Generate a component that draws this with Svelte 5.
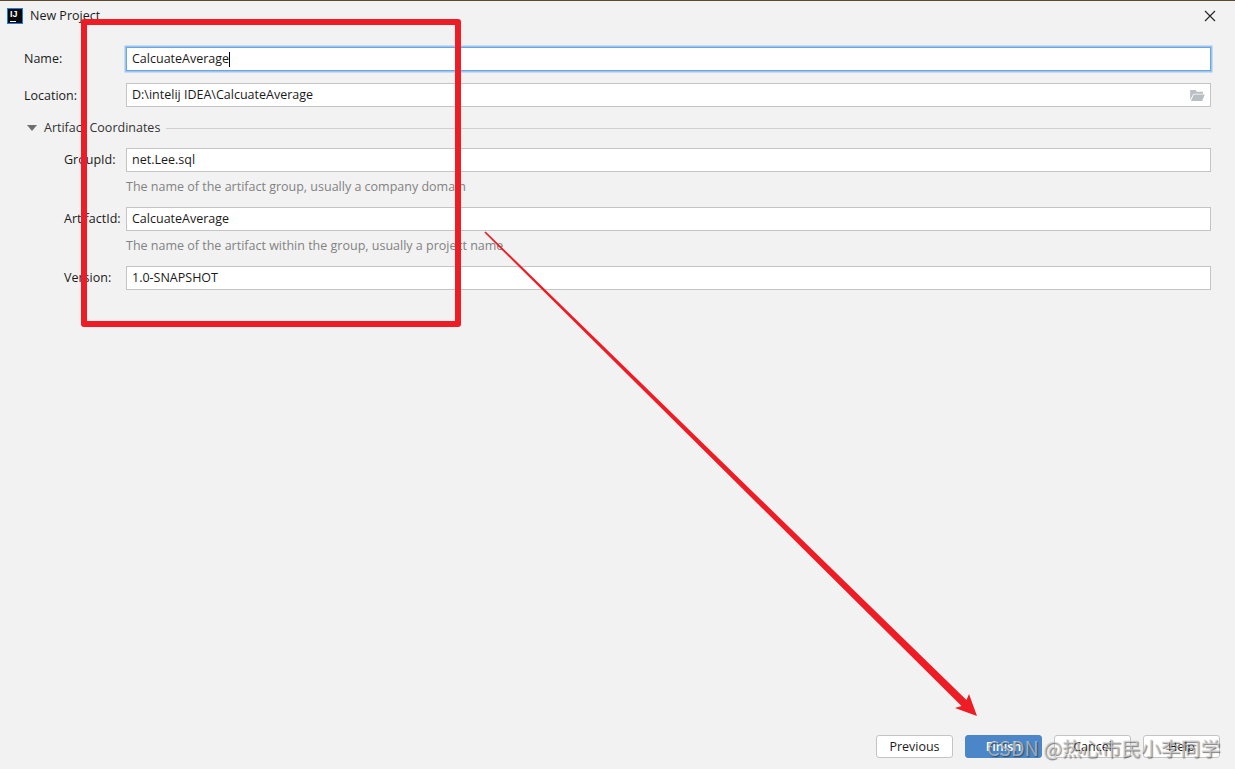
<script lang="ts">
	const buttons = [
		{ label: 'Previous', primary: false },
		{ label: 'Finish', primary: true },
		{ label: 'Cancel', primary: false },
		{ label: 'Help', primary: false }
	];
</script>

<div class="dialog">
	<header class="titlebar">
		<div class="logo"><span class="logo-text">IJ</span><span class="logo-bar"></span></div>
		<span class="title">New Project</span>
		<svg class="close" width="12" height="12" viewBox="0 0 12 12">
			<path d="M1 1 L11 11 M11 1 L1 11" stroke="#222" stroke-width="1.1" fill="none" />
		</svg>
	</header>

	<div class="row name-row">
		<span class="label">Name:</span>
		<div class="field focused">CalcuateAverage<span class="caret"></span></div>
	</div>
	<div class="row location-row">
		<span class="label">Location:</span>
		<div class="field">
			D:\intelij IDEA\CalcuateAverage
			<svg class="folder" width="15" height="11" viewBox="0 0 16 12">
				<path d="M0 0 H6 L7 2 H14 V4 H3.5 L0 11 Z" fill="#b9bec3" />
				<path d="M4 5 H16 L13 12 H0.8 Z" fill="#b9bec3" />
			</svg>
		</div>
	</div>

	<div class="section">
		<span class="triangle"></span>
		<span class="section-title">Artifact Coordinates</span>
		<span class="rule"></span>
	</div>

	<div class="row nested group-row">
		<span class="label">GroupId:</span>
		<div class="field">net.Lee.sql</div>
	</div>
	<p class="hint">The name of the artifact group, usually a company domain</p>
	<div class="row nested after-hint">
		<span class="label">ArtifactId:</span>
		<div class="field">CalcuateAverage</div>
	</div>
	<p class="hint">The name of the artifact within the group, usually a project name</p>
	<div class="row nested after-hint">
		<span class="label">Version:</span>
		<div class="field">1.0-SNAPSHOT</div>
	</div>

	<footer class="footer">
		{#each buttons as b}
			<button class:primary={b.primary}>{b.label}</button>
		{/each}
	</footer>
</div>

<!-- annotations pasted over the screenshot -->
<svg class="marks" width="1235" height="769" viewBox="0 0 1235 769">
	<rect x="84" y="22" width="374" height="302" fill="none" stroke="#ee1c25" stroke-width="6" stroke-linejoin="round" />
	<path d="M485.6 231.4 L966.5 700 L969 694 L977 716 L955 708 L961.5 706 L484.4 232.6 Z" fill="#ee1c25" />
</svg>
<div class="watermark">CSDN @热心市民小李同学</div>

<style>
	:global(body) {
		margin: 0;
		background: #f2f2f2;
	}
	.dialog {
		width: 1235px;
		height: 769px;
		box-sizing: border-box;
		border-top: 1px solid #5c4a32;
		background: #f2f2f2;
		font-family: 'Open Sans', 'Noto Sans', sans-serif;
		font-size: 12.5px;
		color: #1a1a1a;
		display: flex;
		flex-direction: column;
		padding-left: 24px;
		padding-right: 24px;
		position: relative;
		overflow: hidden;
	}
	.titlebar {
		height: 29px;
		margin-left: -17px;
		display: flex;
		align-items: center;
		gap: 7px;
		flex: none;
	}
	.logo {
		width: 16px;
		height: 16px;
		box-sizing: border-box;
		background: #0a0a0a;
		border: 1px solid #1e7fe0;
		position: relative;
		color: #fff;
	}
	.logo-text {
		display: block;
		font-family: 'Liberation Sans', sans-serif;
		font-size: 9px;
		font-weight: 700;
		line-height: 10px;
		padding-left: 2px;
	}
	.logo-bar {
		position: absolute;
		left: 2px;
		bottom: 1px;
		width: 6px;
		height: 1px;
		background: #fff;
	}
	.close {
		margin-left: auto;
		margin-right: -5px;
	}
	.row {
		display: flex;
		align-items: center;
		flex: none;
	}
	.label {
		width: 102px;
		flex: none;
		margin-bottom: 2px;
	}
	.name-row {
		margin-top: 17px;
	}
	.location-row {
		margin-top: 12px;
	}
	.location-row .label {
		margin-bottom: 0;
	}
	.nested {
		margin-left: 40px;
	}
	.nested .label {
		width: 62px;
	}
	.field {
		flex: 1;
		height: 24px;
		box-sizing: border-box;
		background: #fff;
		border: 1px solid #c4c4c4;
		padding-left: 5px;
		line-height: 22px;
		display: flex;
		align-items: center;
		position: relative;
	}
	.focused {
		border-color: #6fa5de;
		box-shadow: 0 0 0 1.5px #9cc6f2;
	}
	.caret {
		width: 1px;
		height: 15px;
		background: #000;
	}
	.folder {
		position: absolute;
		right: 5px;
		top: 6px;
	}
	.section {
		display: flex;
		align-items: center;
		margin-top: 11px;
		margin-bottom: 1px;
		height: 18px;
		flex: none;
	}
	.triangle {
		width: 0;
		height: 0;
		margin: 2px 0 0 3px;
		border-left: 5px solid transparent;
		border-right: 5px solid transparent;
		border-top: 6px solid #6e6e6e;
	}
	.section-title {
		margin-left: 7px;
		color: #333;
	}
	.rule {
		flex: 1;
		height: 1px;
		background: #cfcfcf;
		margin: 2px 0 0 6px;
	}
	.group-row {
		margin-top: 11px;
	}
	.after-hint {
		margin-top: 10px;
	}
	.hint {
		margin: 6px 0 0 102px;
		height: 19px;
		line-height: 18px;
		color: #828282;
	}
	.footer {
		position: absolute;
		right: 15px;
		bottom: 11px;
		display: flex;
		gap: 12px;
	}
	button {
		width: 77px;
		height: 23px;
		box-sizing: border-box;
		padding: 0;
		background: #fff;
		border: 1px solid #c4c4c4;
		border-radius: 3px;
		font-family: inherit;
		font-size: 12.5px;
		color: #1a1a1a;
	}
	button.primary {
		background: #4a86c8;
		border-color: #4a86c8;
		color: #fff;
		font-weight: 600;
	}
	.marks {
		position: absolute;
		left: 0;
		top: 0;
		pointer-events: none;
	}
	.watermark {
		position: absolute;
		left: 987px;
		top: 734px;
		font-family: 'Noto Sans CJK SC', sans-serif;
		font-size: 19.8px;
		line-height: 28px;
		color: rgba(205, 205, 205, 0.7);
		text-shadow: 1px 1px 1px rgba(40, 40, 40, 0.6);
		white-space: nowrap;
	}
</style>
